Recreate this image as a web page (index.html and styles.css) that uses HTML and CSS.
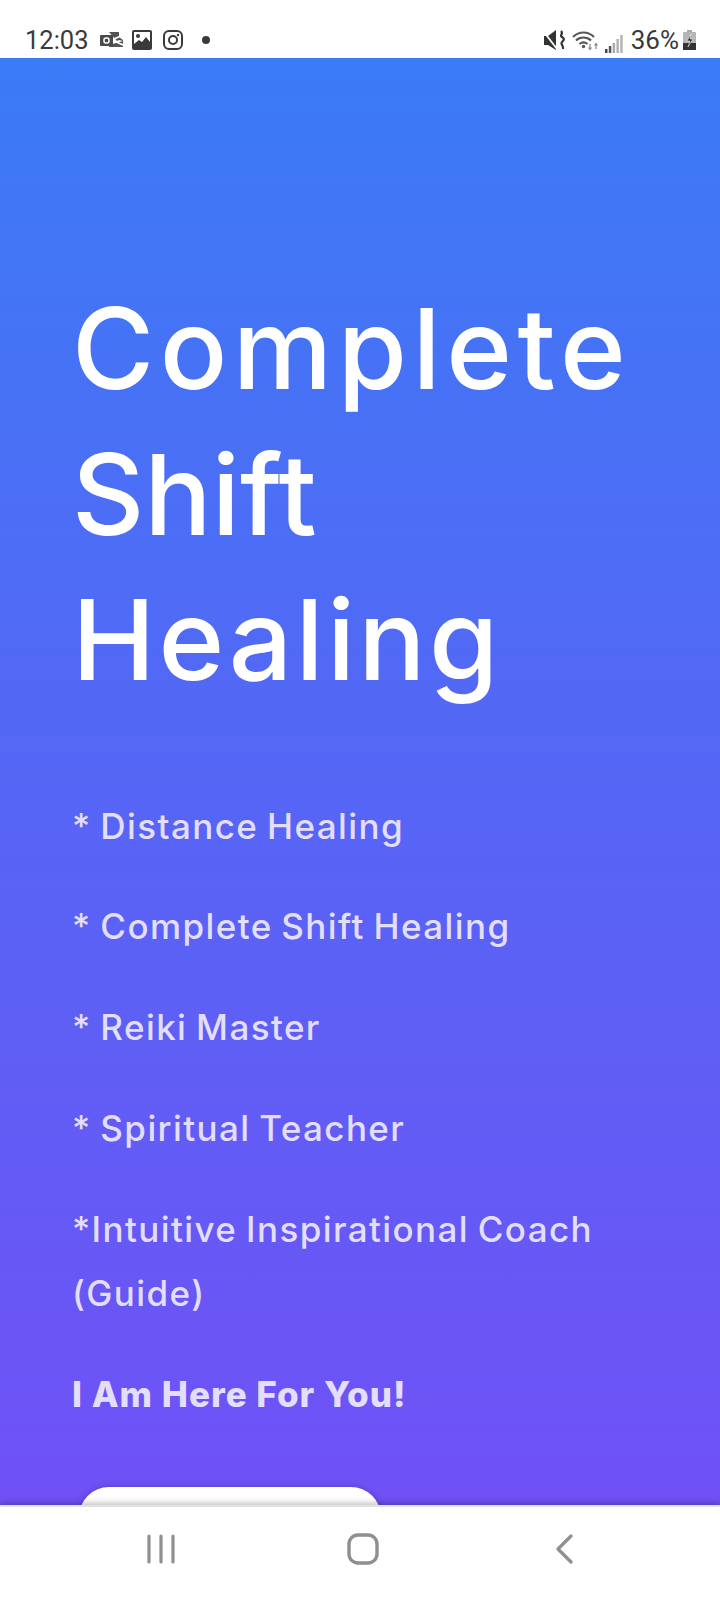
FILE: index.html
```html
<!DOCTYPE html>
<html lang="en">

<head>
    <meta charset="UTF-8">
    <meta name="viewport" content="width=device-width, initial-scale=1.0">
    <title>Complete Shift Healing</title>
    <link rel="stylesheet" href="styles.css">
</head>

<body>
    <!-- Phone status bar -->
    <div class="status-bar">
        <div class="status-left">
            <span class="clock">12:03</span>
            <svg class="icon-outlook" viewBox="0 0 23 16"><path d="M9 0h10v5l4 3v1l-4-1-2 1zM16 11l7-2v6H9v-2z" fill="#555"/><path d="M14 7l9-4M14 9l9 4" fill="none" stroke="#fff" stroke-width="1.600"/><rect x="0" y="3" width="13" height="11" rx="1" fill="#4a4a4a"/><rect x="4" y="6" width="5" height="5" rx="2" fill="none" stroke="#fff" stroke-width="1.500"/></svg>
            <svg class="icon-gallery" viewBox="0 0 20 20"><rect x="0" y="0" width="20" height="20" rx="2" fill="#3a3a3a"/><rect x="2" y="2" width="16" height="14" fill="#fff"/><circle cx="6" cy="6" r="2" fill="#3a3a3a"/><path d="M2 16v-2l5-4 3 2 4-5 4 5v4z" fill="#3a3a3a"/></svg>
            <svg class="icon-insta" viewBox="0 0 20 20"><rect x="1" y="1" width="18" height="18" rx="5" fill="none" stroke="#3a3a3a" stroke-width="2"/><circle cx="10" cy="10" r="4" fill="none" stroke="#3a3a3a" stroke-width="2"/><circle cx="15" cy="5" r="1.200" fill="#3a3a3a"/></svg>
            <span class="dot"></span>
        </div>
        <div class="status-right">
            <svg class="icon-mute" viewBox="0 0 22 20"><path d="M0 6h4l8-6v20l-8-5H0z" fill="#333"/><path d="M0 2l13 17" stroke="#fff" stroke-width="1.800"/><path d="M17 1c3 3-2 4 1 6s2 3 0 5 2 4 1 7" fill="none" stroke="#333" stroke-width="2.200"/></svg>
            <svg class="icon-wifi" viewBox="0 0 27 20"><path d="M1 7c6-6 15-6 21 0M4 10.500c4-4 11-4 15 0M7.500 14c2.500-2 5.500-2 8 0" fill="none" stroke="#555" stroke-width="2.200"/><circle cx="11.500" cy="16.500" r="1.700" fill="#555"/><path d="M18 14v5M16.500 17.500l1.500 2 1.500-2M24 19v-5M22.500 15.500l1.500-2 1.500 2" fill="none" stroke="#888" stroke-width="1.200"/></svg>
            <svg class="icon-signal" viewBox="0 0 18 18"><rect x="0" y="14" width="2.500" height="4" fill="#444"/><rect x="3.800" y="11" width="2.500" height="7" fill="#555"/><rect x="7.600" y="8" width="2.500" height="10" fill="#aaa"/><rect x="11.400" y="4" width="2.500" height="14" fill="#b5b5b5"/><rect x="15.200" y="0" width="2.500" height="18" fill="#b5b5b5"/></svg>
            <span class="battery-text">36%</span>
            <svg class="icon-battery" viewBox="0 0 13 20"><rect x="4" y="0" width="5" height="2" fill="#aaa"/><rect x="0" y="2" width="13" height="18" rx="1" fill="#b5b5b5"/><rect x="0" y="13" width="13" height="7" fill="#333"/><path d="M8 4l-4 7h3l-2 6 5-8H7z" fill="#333" stroke="#fff" stroke-width=".5"/></svg>
        </div>
    </div>

    <!-- Page content -->
    <div class="hero">
        <h1 class="hero-title">Complete<br><span class="line-shift">Shift</span><br><span class="line-healing">Healing</span></h1>
        <p class="hero-item">* Distance Healing</p>
        <p class="hero-item">* Complete Shift Healing</p>
        <p class="hero-item">* Reiki Master</p>
        <p class="hero-item">* Spiritual Teacher</p>
        <p class="hero-item">*Intuitive Inspirational Coach (Guide)</p>
        <p class="hero-strong">I Am Here For You!</p>
        <div class="hero-btn"></div>
    </div>

    <!-- Phone navigation bar -->
    <div class="nav-bar">
        <svg class="nav-recent" viewBox="0 0 28 30"><path d="M2 2v26M14 2v26M26 2v26" fill="none" stroke="#8f8f8f" stroke-width="3.200" stroke-linecap="round"/></svg>
        <svg class="nav-home" viewBox="0 0 32 32"><rect x="2" y="2" width="28" height="28" rx="9" fill="none" stroke="#8f8f8f" stroke-width="3.400"/></svg>
        <svg class="nav-back" viewBox="0 0 17 30"><path d="M15 2L2 15l13 13" fill="none" stroke="#8f8f8f" stroke-width="3.200" stroke-linecap="round" stroke-linejoin="round"/></svg>
    </div>
</body>

</html>
```

FILE: styles.css
```css
body {
    margin: 0;
    width: 720px;
    height: 1600px;
    overflow: hidden;
    display: flex;
    flex-direction: column;
    background: white;
    font-family: Inter, "Noto Sans", sans-serif;
}

.status-bar {
    height: 58px;
    flex-shrink: 0;
    display: flex;
    justify-content: space-between;
    align-items: center;
    padding: 22px 24px 0 25px;
    box-sizing: border-box;
    background: white;
    color: #3a3a3a;
    font-family: Roboto, sans-serif;
}

.status-left,
.status-right {
    display: flex;
    align-items: center;
}

.clock {
    font-size: 25.500px;
    margin-right: 11px;
}

.icon-outlook {
    width: 23px;
    height: 16px;
    margin-right: 9px;
}

.icon-gallery,
.icon-insta {
    width: 20px;
    height: 20px;
    margin-right: 11px;
}

.dot {
    width: 8px;
    height: 8px;
    border-radius: 50%;
    background: #3a3a3a;
    margin-left: 8px;
}

.icon-mute {
    width: 22px;
    height: 20px;
    margin-right: 6px;
}

.icon-wifi {
    width: 27px;
    height: 20px;
    margin-right: 6px;
}

.icon-signal {
    width: 18px;
    height: 18px;
    margin-right: 8px;
    align-self: flex-end;
    margin-bottom: 2px;
}

.battery-text {
    font-size: 26px;
    margin-right: 4px;
}

.icon-battery {
    width: 13px;
    height: 20px;
}

.hero {
    height: 1447px;
    flex-shrink: 0;
    position: relative;
    overflow: hidden;
    padding: 218px 72px 0 72px;
    box-sizing: border-box;
    background: linear-gradient(to bottom, #3b7bf5, #7051f5);
    color: #e3defc;
}

.hero-title {
    margin: 0 0 81px;
    color: white;
    font-size: 112px;
    font-weight: 550;
    line-height: 145.500px;
    letter-spacing: 5.500px;
}

/* these two lines run tighter than the first */
.line-shift {
    letter-spacing: 0;
}

.line-healing {
    letter-spacing: 3.200px;
}

.hero-item {
    margin: 0 0 36.500px;
    font-size: 35px;
    font-weight: 500;
    line-height: 64.300px;
    letter-spacing: 1.400px;
    word-spacing: -2px;
}

.hero-strong {
    margin: 0;
    font-size: 35px;
    font-weight: 800;
    line-height: 64px;
    letter-spacing: 1px;
}

.hero-btn {
    position: absolute;
    left: 79px;
    top: 1429px;
    width: 302px;
    height: 60px;
    border-radius: 36px;
    background: white;
    box-shadow: 0 0 6px rgba(50, 20, 120, 0.35);
}

.nav-bar {
    flex: 1;
    position: relative;
    display: flex;
    align-items: center;
    padding: 0 0 9px 147px;
    box-sizing: border-box;
    background: white;
    border-top: 2px solid #e2e2e2;
    box-shadow: 0 -2px 6px rgba(0, 0, 0, 0.25);
}

.nav-recent {
    width: 28px;
    height: 30px;
    margin-right: 172px;
}

.nav-home {
    width: 32px;
    height: 32px;
    margin-right: 177px;
}

.nav-back {
    width: 17px;
    height: 30px;
}
```
